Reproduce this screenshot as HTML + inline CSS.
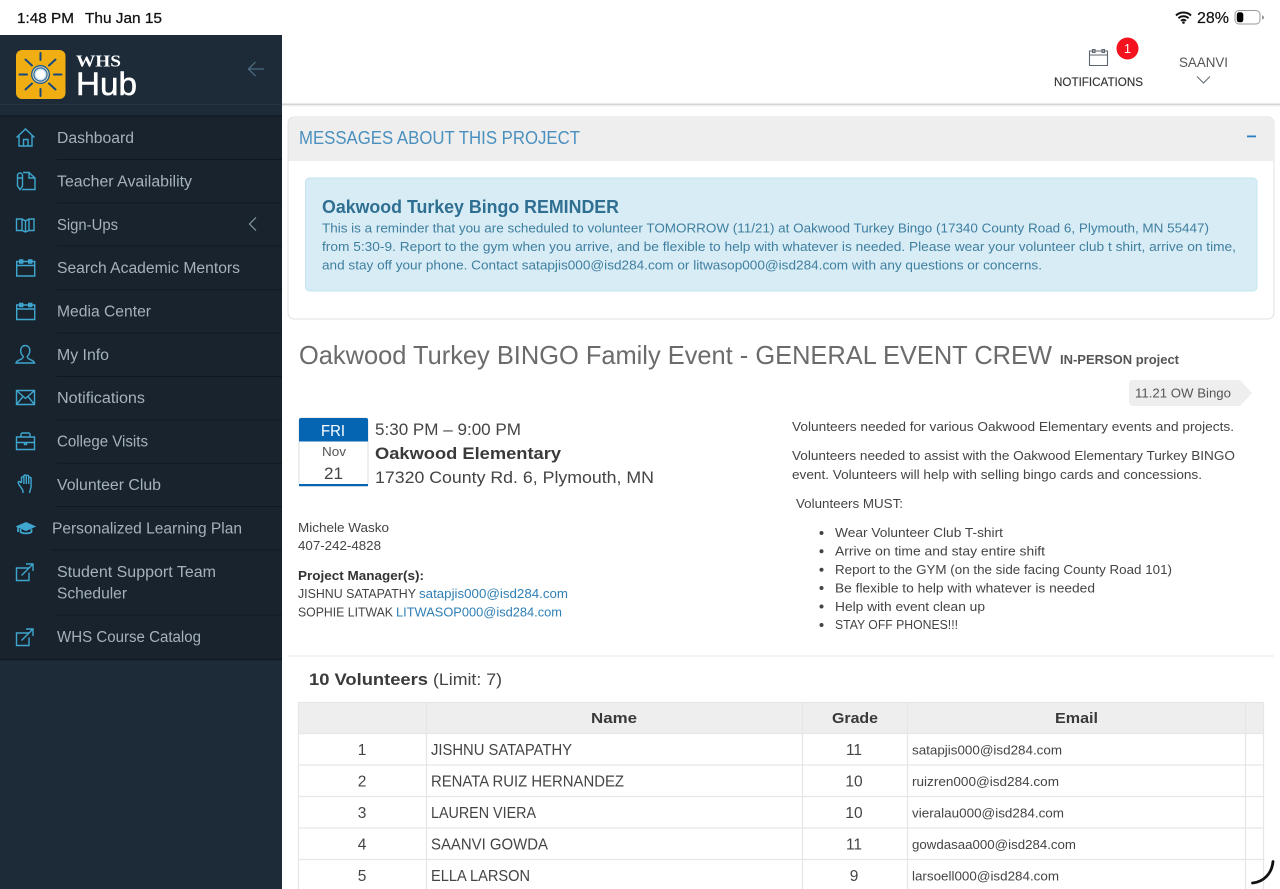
<!DOCTYPE html>
<html lang="en"><head><meta charset="utf-8"><title>WHS Hub</title>
<style>
html,body{margin:0;padding:0;background:#fff;overflow:hidden}
svg{display:block}
text{font-family:"Liberation Sans",sans-serif;white-space:pre}
.s{font-size:15.5px;fill:#a6b1ba}
.b{font-size:13px;fill:#444}
.a{font-size:13px;fill:#3f7f9f}
.l{font-size:13px;fill:#2f7fb5}
.n{font-size:15.5px;fill:#444}
.e{font-size:13px;fill:#444}
.i{fill:none;stroke:#3fa7cf;stroke-width:1.4}
.g{stroke:#e6e6e6;stroke-width:1.2;fill:none}
.sep{stroke:#10181f;stroke-width:1}
</style></head>
<body>
<svg width="1280" height="889" viewBox="0 0 1280 889" xmlns="http://www.w3.org/2000/svg">
<rect width="1280" height="889" fill="#fff"/>
<!-- status bar -->
<text x="17" y="23" font-size="15" fill="#111" stroke="#111" stroke-width=".25" textLength="57" lengthAdjust="spacingAndGlyphs">1:48 PM</text>
<text x="85" y="23" font-size="15" fill="#111" stroke="#111" stroke-width=".25" textLength="77" lengthAdjust="spacingAndGlyphs">Thu Jan 15</text>
<path d="M1176 15.500a11 11 0 0 1 15 0M1178.500 18.200a7.500 7.500 0 0 1 10 0M1181 20.800a3.500 3.500 0 0 1 5 0" fill="none" stroke="#111" stroke-width="2"/>
<circle cx="1183.500" cy="22.500" r="1.300" fill="#111"/>
<text x="1197" y="23" font-size="16" fill="#111" stroke="#111" stroke-width=".2" textLength="32" lengthAdjust="spacingAndGlyphs">28%</text>
<rect x="1235" y="10.500" width="25" height="13.500" rx="4" fill="#fff" stroke="#999"/>
<rect x="1236.800" y="12.300" width="6.500" height="10" rx="2.500" fill="#000"/>
<path d="M1262 15.500v4a2 2 0 0 0 0-4z" fill="#999"/>

<!-- sidebar -->
<rect x="0" y="35" width="282" height="854" fill="#1d2b38"/>
<rect x="0" y="116" width="282" height="544" fill="#18232d"/>
<path d="M0 104.500H282" stroke="#263543" stroke-width="1"/>
<path d="M0 116H282" stroke="#10181f" stroke-width="1.200"/>
<path d="M0 659.500H282" stroke="#10181f" stroke-width="1.200"/>
<!-- logo -->
<rect x="16" y="50" width="49.500" height="49" rx="6" fill="#f0ae12"/>
<g stroke="#14487f" stroke-width="2" stroke-linecap="round">
<path d="M40.500 53v7M40.500 89v7M19.500 74.500h7.500M54 74.500h7.500M25.500 59.500l6.500 6M49 83.500l6.500 6M55.500 59.500l-6.500 6M32 83.500l-6.500 6"/>
</g>
<circle cx="40.500" cy="74.500" r="8.800" fill="#f7e7b0" stroke="#1c5a94" stroke-width="1.300"/>
<circle cx="40.500" cy="74.500" r="6.600" fill="#cfe0ee" stroke="#2a6aa6" stroke-width="1.200"/>
<circle cx="40.500" cy="74.500" r="4.600" fill="#fff"/>
<text x="76" y="66.500" font-size="16.500" font-weight="700" fill="#fff" style="font-family:'Liberation Serif',serif" textLength="45" lengthAdjust="spacingAndGlyphs">WHS</text>
<text x="76" y="95" font-size="32" fill="#fff" stroke="#fff" stroke-width=".5" textLength="61" lengthAdjust="spacingAndGlyphs">Hub</text>
<path d="M264 69H248.500M255.500 62l-7 7 7 7" fill="none" stroke="#4d6a80" stroke-width="1.300"/>

<!-- separators -->
<g class="sep">
<path d="M57 159.500H282M57 203H282M57 246H282M57 289.800H282M57 333H282M57 376.500H282M57 420H282M57 463.300H282M57 506.500H282M52 550H282M57 615H282"/>
</g>
<!-- menu text -->
<text class="s" x="57" y="143" textLength="77" lengthAdjust="spacingAndGlyphs">Dashboard</text>
<text class="s" x="57" y="186.500" textLength="135" lengthAdjust="spacingAndGlyphs">Teacher Availability</text>
<text class="s" x="57" y="230" textLength="61" lengthAdjust="spacingAndGlyphs">Sign-Ups</text>
<text class="s" x="57" y="273" textLength="183" lengthAdjust="spacingAndGlyphs">Search Academic Mentors</text>
<text class="s" x="57" y="316.500" textLength="94" lengthAdjust="spacingAndGlyphs">Media Center</text>
<text class="s" x="57" y="360" textLength="52" lengthAdjust="spacingAndGlyphs">My Info</text>
<text class="s" x="57" y="403" textLength="88" lengthAdjust="spacingAndGlyphs">Notifications</text>
<text class="s" x="57" y="446.500" textLength="91" lengthAdjust="spacingAndGlyphs">College Visits</text>
<text class="s" x="57" y="490" textLength="104" lengthAdjust="spacingAndGlyphs">Volunteer Club</text>
<text class="s" x="52" y="533.500" textLength="190" lengthAdjust="spacingAndGlyphs">Personalized Learning Plan</text>
<text class="s" x="57" y="577" textLength="159" lengthAdjust="spacingAndGlyphs">Student Support Team</text>
<text class="s" x="57" y="598.500" textLength="70" lengthAdjust="spacingAndGlyphs">Scheduler</text>
<text class="s" x="57" y="642" textLength="144" lengthAdjust="spacingAndGlyphs">WHS Course Catalog</text>
<path d="M256 217.500l-6.500 6.500 6.500 6.500" fill="none" stroke="#93a1ad" stroke-width="1.100"/>
<!-- icons -->
<g class="i">
<path d="M16.500 137.500L25.500 129l9 8.500M19 135.500V146H32V135.500M23.500 146V139.500H28V146"/>
<path d="M23 172.500H29L35 178V189.500H22M29 172.500V178H35M17.500 175.500a2.500 2.500 0 0 1 5 0V186l-2.500 3.500-2.500-3.500zM17.500 178H22.500"/>
<path d="M16.500 219H22L25.500 221 29 219H34V230.500H29L25.500 232 22 230.500H16.500zM22 219V230.500M25.500 221V232M29 219V230.500"/>
<path d="M16.700 261.500H34.700V276H16.700zM16.700 265.500H34.700M19.700 260h3v3h-3zM28.700 260h3v3h-3z"/>
<path d="M16.700 305H34.700V319.500H16.700zM16.700 309H34.700M19.700 303.500h3v3h-3zM28.700 303.500h3v3h-3z"/>
<path d="M25.500 345.500c-3 0-4.800 2.200-4.800 5.300 0 2.500 1.300 4.500 2.600 5.700 0 1.500-1.500 2.500-3.500 3.300-2 .8-3.500 1.800-3.800 3.200H34.500c-.3-1.400-1.800-2.400-3.800-3.200-2-.8-3.500-1.800-3.500-3.300 1.300-1.200 2.600-3.200 2.600-5.700 0-3.100-1.800-5.300-4.800-5.300z"/>
<path d="M16.500 390.500H34.500V404.500H16.500zM16.500 390.500L25.500 398.500 34.500 390.500M16.500 404.500L23 396.500M34.500 404.500L28 396.500"/>
<path d="M16.500 437H34.500V449.500H16.500zM16.500 442.500H34.500M21 437V434.500a1.500 1.500 0 0 1 1.500-1.500h6a1.500 1.500 0 0 1 1.500 1.500V437M24.500 442v2.500h2v-2.500"/>
<path d="M21.500 483V478a1.200 1.200 0 0 1 2.400 0V484M23.900 484V476.200a1.200 1.200 0 0 1 2.400 0V484M26.300 484V476.500a1.200 1.200 0 0 1 2.400 0V484M28.700 484V478.500a1.200 1.200 0 0 1 2.400 0V486c0 2.500-1.200 4-1.600 7M21.500 483c-1-1-2.500-1.800-3.100-1.300-.6.500-.2 1.500.6 3l3.200 4.500c.6.900.8 2 .8 3.800"/>
<path d="M26 522.800L34.500 526.500 26 530.300 17.300 526.500z" fill="#3fa7cf"/>
<path d="M20.500 529V532c2.500 1.800 8.500 1.800 11 0V529M18 527V532" stroke-width="1.700"/>
<path d="M29 568H16.500V580.500H29V572.500M21.500 575.500L32.500 564.500M26 564H33V571"/>
<path d="M29 633H16.500V645.500H29V637.500M21.500 640.500L32.500 629.500M26 629H33V636"/>
</g>

<!-- top bar -->
<rect x="282" y="103.500" width="998" height="1.500" fill="#d4d4d4"/>
<rect x="282" y="105" width="998" height="1.500" fill="#f1f1f1"/>
<g fill="none" stroke="#5d6670" stroke-width="1.100">
<path d="M1089.500 51H1107.500V65.500H1089.500zM1089.500 55H1107.500M1092.500 49.500h2.500v3h-2.500zM1102 49.500h2.500v3H1102z"/>
</g>
<circle cx="1127.500" cy="48.500" r="11" fill="#f5121f"/>
<text x="1127.500" y="53" font-size="12.500" fill="#fff" text-anchor="middle">1</text>
<text x="1054" y="86" font-size="12" fill="#333" stroke="#333" stroke-width=".15" textLength="89" lengthAdjust="spacingAndGlyphs">NOTIFICATIONS</text>
<text x="1179" y="67" font-size="14" fill="#555" textLength="49" lengthAdjust="spacingAndGlyphs">SAANVI</text>
<path d="M1197 76.500L1203.500 83 1210 76.500" fill="none" stroke="#5d6670" stroke-width="1"/>

<!-- messages panel -->
<rect x="288" y="117" width="986" height="202" rx="6" fill="#fff" stroke="#e0e0e0"/>
<path d="M288.500 161V123a6 6 0 0 1 6-6H1268a6 6 0 0 1 6 6V161z" fill="#eeeeee"/>
<text x="299" y="144" font-size="18" fill="#4a90bf" textLength="281" lengthAdjust="spacingAndGlyphs">MESSAGES ABOUT THIS PROJECT</text>
<rect x="1247" y="135.500" width="9" height="1.800" fill="#2a80c0"/>
<rect x="305.500" y="178" width="951.500" height="113" rx="4" fill="#d8ecf6" stroke="#c3e6f1"/>
<text x="322" y="213" font-size="18" font-weight="700" fill="#2f6f91" textLength="297" lengthAdjust="spacingAndGlyphs">Oakwood Turkey Bingo REMINDER</text>
<text class="a" x="322" y="232.500" textLength="887" lengthAdjust="spacingAndGlyphs">This is a reminder that you are scheduled to volunteer TOMORROW (11/21) at Oakwood Turkey Bingo (17340 County Road 6, Plymouth, MN 55447)</text>
<text class="a" x="322" y="251" textLength="914" lengthAdjust="spacingAndGlyphs">from 5:30-9. Report to the gym when you arrive, and be flexible to help with whatever is needed. Please wear your volunteer club t shirt, arrive on time,</text>
<text class="a" x="322" y="269.500" textLength="720" lengthAdjust="spacingAndGlyphs">and stay off your phone. Contact satapjis000@isd284.com or litwasop000@isd284.com with any questions or concerns.</text>

<!-- heading -->
<text x="299" y="364" font-size="26" fill="#6b6b6b" textLength="753" lengthAdjust="spacingAndGlyphs">Oakwood Turkey BINGO Family Event - GENERAL EVENT CREW</text>
<text x="1060" y="364" font-size="13" font-weight="700" fill="#555" textLength="119" lengthAdjust="spacingAndGlyphs">IN-PERSON project</text>
<path d="M1133 380H1240L1252 393 1240 406H1133a4 4 0 0 1-4-4V384a4 4 0 0 1 4-4z" fill="#eeeeee"/>
<text x="1135" y="397.500" font-size="13" fill="#555" textLength="96" lengthAdjust="spacingAndGlyphs">11.21 OW Bingo</text>

<!-- date tile -->
<rect x="299" y="418" width="69" height="68" rx="2.500" fill="#fff" stroke="#d9dfe6"/>
<path d="M299 441.500V420a2 2 0 0 1 2-2H366a2 2 0 0 1 2 2V441.500z" fill="#0565b3"/>
<rect x="299" y="484" width="69" height="2.200" fill="#0565b3"/>
<text x="321" y="436" font-size="16" fill="#fff" textLength="24" lengthAdjust="spacingAndGlyphs">FRI</text>
<text x="322" y="456" font-size="13" fill="#555" textLength="24" lengthAdjust="spacingAndGlyphs">Nov</text>
<text x="324" y="479" font-size="17" fill="#444" textLength="19" lengthAdjust="spacingAndGlyphs">21</text>
<text x="375" y="435" font-size="17" fill="#444" textLength="146" lengthAdjust="spacingAndGlyphs">5:30 PM – 9:00 PM</text>
<text x="375" y="459" font-size="17" font-weight="700" fill="#3a3a3a" textLength="186" lengthAdjust="spacingAndGlyphs">Oakwood Elementary</text>
<text x="375" y="483" font-size="17" fill="#444" textLength="279" lengthAdjust="spacingAndGlyphs">17320 County Rd. 6, Plymouth, MN</text>

<!-- contact -->
<text class="b" x="298" y="532" textLength="91" lengthAdjust="spacingAndGlyphs">Michele Wasko</text>
<text class="b" x="298" y="550" textLength="83" lengthAdjust="spacingAndGlyphs">407-242-4828</text>
<text class="b" x="298" y="580" font-weight="700" style="fill:#333" textLength="126" lengthAdjust="spacingAndGlyphs">Project Manager(s):</text>
<text class="b" x="298" y="598" textLength="118" lengthAdjust="spacingAndGlyphs">JISHNU SATAPATHY</text>
<text class="l" x="419" y="598" textLength="149" lengthAdjust="spacingAndGlyphs">satapjis000@isd284.com</text>
<text class="b" x="298" y="616.500" textLength="95" lengthAdjust="spacingAndGlyphs">SOPHIE LITWAK</text>
<text class="l" x="396" y="616.500" textLength="166" lengthAdjust="spacingAndGlyphs">LITWASOP000@isd284.com</text>

<!-- right column -->
<text class="b" x="792" y="431" textLength="442" lengthAdjust="spacingAndGlyphs">Volunteers needed for various Oakwood Elementary events and projects.</text>
<text class="b" x="792" y="460" textLength="443" lengthAdjust="spacingAndGlyphs">Volunteers needed to assist with the Oakwood Elementary Turkey BINGO</text>
<text class="b" x="792" y="479" textLength="410" lengthAdjust="spacingAndGlyphs">event. Volunteers will help with selling bingo cards and concessions.</text>
<text class="b" x="796" y="508" textLength="107" lengthAdjust="spacingAndGlyphs">Volunteers MUST:</text>
<g fill="#444">
<circle cx="821.500" cy="533" r="2"/><circle cx="821.500" cy="551.300" r="2"/><circle cx="821.500" cy="569.800" r="2"/><circle cx="821.500" cy="588" r="2"/><circle cx="821.500" cy="606.500" r="2"/><circle cx="821.500" cy="625" r="2"/>
</g>
<text class="b" x="835" y="537" textLength="168" lengthAdjust="spacingAndGlyphs">Wear Volunteer Club T-shirt</text>
<text class="b" x="835" y="555.500" textLength="210" lengthAdjust="spacingAndGlyphs">Arrive on time and stay entire shift</text>
<text class="b" x="835" y="574" textLength="337" lengthAdjust="spacingAndGlyphs">Report to the GYM (on the side facing County Road 101)</text>
<text class="b" x="835" y="592.500" textLength="260" lengthAdjust="spacingAndGlyphs">Be flexible to help with whatever is needed</text>
<text class="b" x="835" y="611" textLength="150" lengthAdjust="spacingAndGlyphs">Help with event clean up</text>
<text class="b" x="835" y="629" textLength="123" lengthAdjust="spacingAndGlyphs">STAY OFF PHONES!!!</text>

<path d="M288 656H1274" stroke="#eeeeee" stroke-width="1.200"/>

<!-- volunteers -->
<text x="309" y="685" font-size="17" font-weight="700" fill="#3a3a3a" textLength="119" lengthAdjust="spacingAndGlyphs">10 Volunteers</text>
<text x="433" y="685" font-size="17" fill="#444" textLength="69" lengthAdjust="spacingAndGlyphs">(Limit: 7)</text>

<rect x="298.500" y="702.500" width="965" height="31" fill="#eeeeee"/>
<path class="g" d="M298.500 702.500H1263.500M298.500 733.500H1263.500M298.500 765H1263.500M298.500 796.500H1263.500M298.500 828H1263.500M298.500 859.500H1263.500M298.500 702.500V889M426.500 702.500V889M802.500 702.500V889M907.500 702.500V889M1245.500 702.500V889M1263.500 702.500V889"/>
<text x="591" y="723" font-size="15" font-weight="700" fill="#3a3a3a" textLength="46" lengthAdjust="spacingAndGlyphs">Name</text>
<text x="832" y="723" font-size="15" font-weight="700" fill="#3a3a3a" textLength="46" lengthAdjust="spacingAndGlyphs">Grade</text>
<text x="1055" y="723" font-size="15" font-weight="700" fill="#3a3a3a" textLength="43" lengthAdjust="spacingAndGlyphs">Email</text>

<g text-anchor="middle">
<text class="n" x="362" y="755">1</text><text class="n" x="362" y="786.500">2</text><text class="n" x="362" y="818">3</text><text class="n" x="362" y="849.500">4</text><text class="n" x="362" y="881">5</text>
<text class="n" x="854" y="755">11</text><text class="n" x="854" y="786.500">10</text><text class="n" x="854" y="818">10</text><text class="n" x="854" y="849.500">11</text><text class="n" x="854" y="881">9</text>
</g>
<text class="n" x="431" y="755" textLength="141" lengthAdjust="spacingAndGlyphs">JISHNU SATAPATHY</text>
<text class="n" x="431" y="786.500" textLength="193" lengthAdjust="spacingAndGlyphs">RENATA RUIZ HERNANDEZ</text>
<text class="n" x="431" y="818" textLength="105" lengthAdjust="spacingAndGlyphs">LAUREN VIERA</text>
<text class="n" x="431" y="849.500" textLength="117" lengthAdjust="spacingAndGlyphs">SAANVI GOWDA</text>
<text class="n" x="431" y="881" textLength="99" lengthAdjust="spacingAndGlyphs">ELLA LARSON</text>
<text class="e" x="912" y="754.500" textLength="150" lengthAdjust="spacingAndGlyphs">satapjis000@isd284.com</text>
<text class="e" x="912" y="786" textLength="147" lengthAdjust="spacingAndGlyphs">ruizren000@isd284.com</text>
<text class="e" x="912" y="817.500" textLength="152" lengthAdjust="spacingAndGlyphs">vieralau000@isd284.com</text>
<text class="e" x="912" y="849" textLength="164" lengthAdjust="spacingAndGlyphs">gowdasaa000@isd284.com</text>
<text class="e" x="912" y="880.500" textLength="147" lengthAdjust="spacingAndGlyphs">larsoell000@isd284.com</text>

<!-- spinner -->
<path d="M1273 861.500C1272 873 1264 882 1252.500 883" fill="none" stroke="#111" stroke-width="2.800" stroke-linecap="round"/>
</svg>
</body></html>
